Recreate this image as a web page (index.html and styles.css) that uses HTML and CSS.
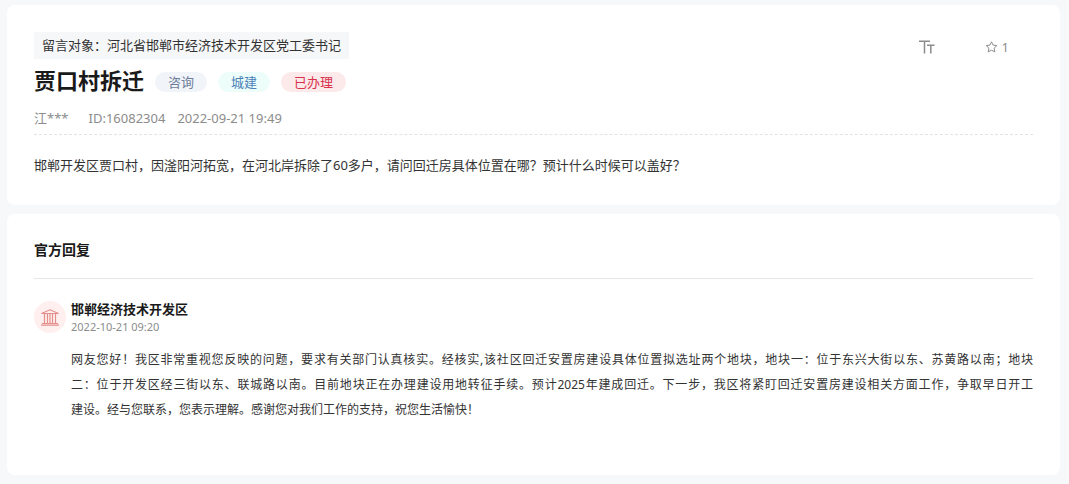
FILE: index.html
```html
<!DOCTYPE html>
<html lang="zh-CN">
<head>
<meta charset="utf-8">
<meta name="viewport" content="width=device-width, initial-scale=1">
<title>贾口村拆迁</title>
<link rel="stylesheet" href="styles.css">
</head>
<body>
<main class="page">
  <article class="card message">
    <div class="message-top">
      <p class="target">留言对象：河北省邯郸市经济技术开发区党工委书记</p>
      <div class="tools">
        <button class="tool" type="button" aria-label="字体大小">
          <svg width="16" height="14" viewBox="0 0 16 14" fill="none" stroke="currentColor" stroke-width="1.5"><path d="M0 1.2h11M5.500 1v12.500M8 5.200h7.500M11.800 5v8.500"/></svg>
        </button>
        <button class="tool" type="button" aria-label="收藏 1">
          <svg width="13" height="12" viewBox="0 0 12 12" fill="none" stroke="currentColor" stroke-linejoin="round"><path d="M6 .8l1.600 3.300 3.700.5-2.700 2.600.7 3.700L6 9.200l-3.300 1.700.7-3.700L.7 4.600l3.700-.5z"/></svg>
          <span>1</span>
        </button>
      </div>
    </div>
    <div class="title-row">
      <h1 class="title">贾口村拆迁</h1>
      <span class="tag tag-type">咨询</span>
      <span class="tag tag-field">城建</span>
      <span class="tag tag-state">已办理</span>
    </div>
    <div class="meta">
      <span class="author">江***</span>
      <span>ID:16082304</span>
      <time>2022-09-21 19:49</time>
    </div>
    <p class="content">邯郸开发区贾口村，因滏阳河拓宽，在河北岸拆除了60多户，请问回迁房具体位置在哪？预计什么时候可以盖好？</p>
  </article>

  <section class="card reply">
    <h2 class="heading">官方回复</h2>
    <div class="reply-body">
      <div class="avatar">
        <svg width="18" height="17" viewBox="0 0 18 17" fill="none" stroke="currentColor" stroke-width="1.200"><path d="M.5 4.500L9 .8l8.500 3.700zM0 16.200h18M1 14.500h16M3.500 5v9.500M6.500 5v9.500M9 5v9.500M11.500 5v9.500M14.500 5v9.500"/></svg>
      </div>
      <div class="reply-main">
        <h3 class="office">邯郸经济技术开发区</h3>
        <time class="reply-time">2022-10-21 09:20</time>
        <p class="answer">
          <span class="line">网友您好！我区非常重视您反映的问题，要求有关部门认真核实。经核实,该社区回迁安置房建设具体位置拟选址两个地块，地块一：位于东兴大街以东、苏黄路以南；地块</span>
          <span class="line">二：位于开发区经三街以东、联城路以南。目前地块正在办理建设用地转征手续。预计2025年建成回迁。下一步，我区将紧盯回迁安置房建设相关方面工作，争取早日开工</span>
          <span class="line line-last">建设。经与您联系，您表示理解。感谢您对我们工作的支持，祝您生活愉快！</span>
        </p>
      </div>
    </div>
  </section>
</main>
</body>
</html>
```
FILE: styles.css
```css
* {
  box-sizing: border-box;
}

body,
h1,
h2,
h3,
p {
  margin: 0;
}

body {
  background: #f7f8fa;
  color: #333;
  font: 13px/20px "Noto Sans", "Noto Sans CJK SC", sans-serif;
}

.page {
  display: flex;
  flex-direction: column;
  gap: 9px;
  padding: 5px 9px 8px 7px;
}

.card {
  background: #fff;
  border-radius: 8px;
  padding: 27px;
}

.message-top {
  display: flex;
  justify-content: space-between;
  align-items: center;
}

.target {
  background: #f6f7f9;
  padding: 3px 8px 4px;
}

.tools {
  display: flex;
  align-items: center;
  gap: 50px;
  padding-right: 24px;
}

.tool {
  display: flex;
  align-items: center;
  gap: 4px;
  padding: 2px 0 0;
  border: 0;
  background: none;
  color: #8c8c8c;
  font: inherit;
  cursor: pointer;
}

.title-row {
  display: flex;
  align-items: center;
  gap: 11px;
  padding-top: 5px;
}

.title {
  padding-bottom: 3px;
  color: #1a1a1a;
  font-size: 22px;
  line-height: 32px;
}

.tag {
  border-radius: 10px;
  padding: 0 13px;
}

.tag-type {
  background: #f1f4f9;
  color: #6d7f99;
}

.tag-field {
  background: #edfdfa;
  color: #4b82b8;
}

.tag-state {
  background: #fce9ea;
  color: #d9304c;
}

.meta {
  display: flex;
  gap: 12px;
  padding: 9px 0 6px;
  border-bottom: 1px dashed #e3e3e3;
  color: #8c8c8c;
}

.author {
  margin-right: 8px;
}

.content {
  padding: 20px 0 3px;
}

.reply {
  padding-bottom: 53px;
}

.heading {
  padding-bottom: 20px;
  border-bottom: 1px solid #e6e6e6;
  color: #1a1a1a;
  font-size: 14px;
  line-height: 17px;
}

.reply-body {
  display: flex;
  gap: 5px;
  padding-top: 20px;
}

.avatar {
  display: flex;
  flex: none;
  align-items: center;
  justify-content: center;
  width: 32px;
  height: 32px;
  margin-top: 2px;
  border-radius: 50%;
  background: #ffefee;
  color: #e58f8c;
}

.reply-main {
  flex: 1;
}

.office {
  color: #1a1a1a;
  font-size: 13px;
  line-height: 20px;
}

.reply-time {
  display: block;
  color: #8c8c8c;
  font-size: 11px;
  line-height: 16px;
}

.answer {
  padding-top: 12px;
  font-size: 12px;
  line-height: 25px;
}

.line {
  display: block;
  text-align: justify;
  text-align-last: justify;
}

.line-last {
  text-align-last: left;
}
```
